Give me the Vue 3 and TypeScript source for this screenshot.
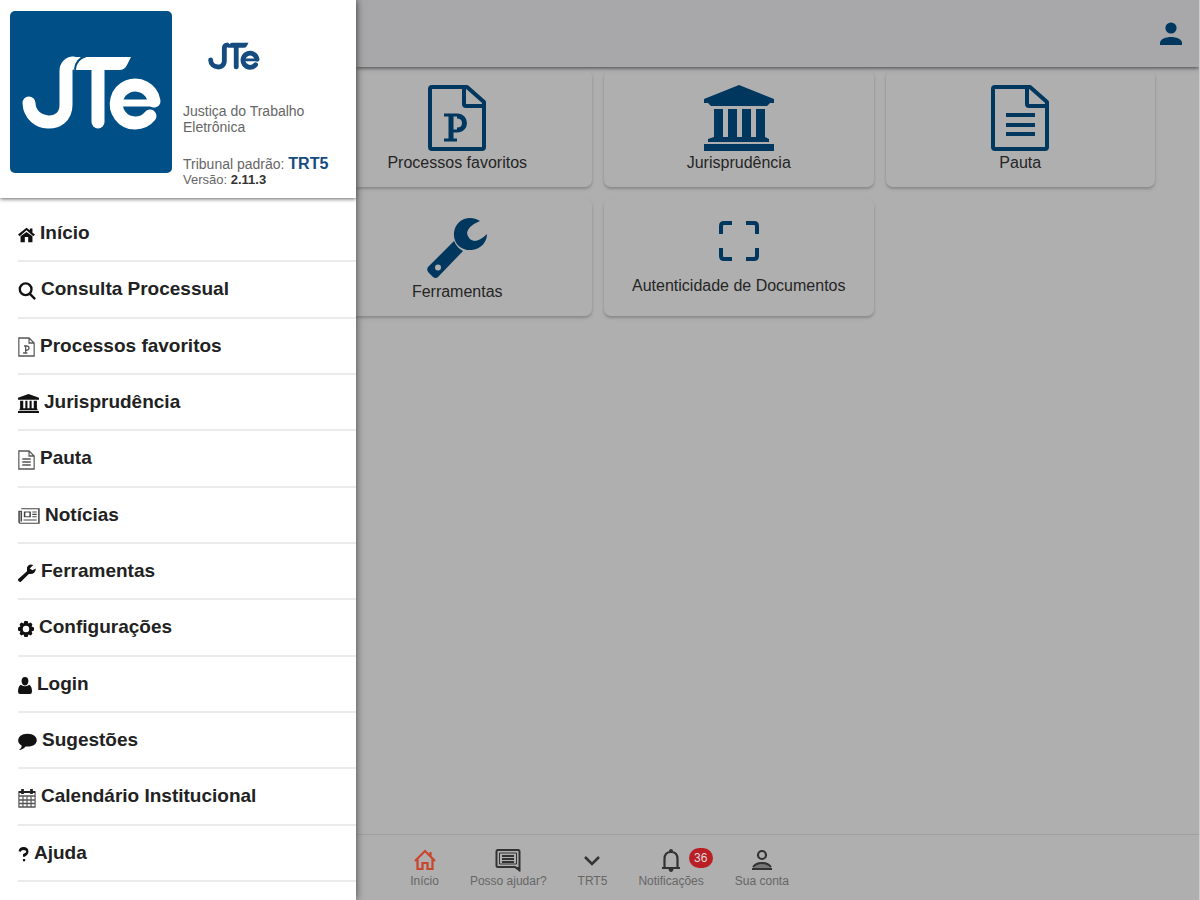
<script setup lang="ts">
interface MenuItem {
  icon: string
  label: string
  width: number
  height: number
}

const menu: MenuItem[] = [
  { icon: 'home', label: 'Início', width: 17, height: 17 },
  { icon: 'search', label: 'Consulta Processual', width: 18, height: 18 },
  { icon: 'file-p', label: 'Processos favoritos', width: 17, height: 20 },
  { icon: 'bank', label: 'Jurisprudência', width: 21, height: 19 },
  { icon: 'file-lines', label: 'Pauta', width: 17, height: 20 },
  { icon: 'news', label: 'Notícias', width: 22, height: 16 },
  { icon: 'wrench', label: 'Ferramentas', width: 18, height: 18 },
  { icon: 'gear', label: 'Configurações', width: 16, height: 16 },
  { icon: 'user', label: 'Login', width: 14, height: 17 },
  { icon: 'chat', label: 'Sugestões', width: 19, height: 17 },
  { icon: 'calendar', label: 'Calendário Institucional', width: 18, height: 20 },
  { icon: 'question', label: 'Ajuda', width: 11, height: 15 },
]

const cards = [
  { icon: 'file-p', label: 'Processos favoritos', start: true },
  { icon: 'bank', label: 'Jurisprudência', start: false },
  { icon: 'file-lines', label: 'Pauta', start: false },
  { icon: 'wrench', label: 'Ferramentas', start: true },
  { icon: 'scan', label: 'Autenticidade de Documentos', start: false },
]

const tabs = [
  { icon: 'home', label: 'Início', badge: '' },
  { icon: 'help', label: 'Posso ajudar?', badge: '' },
  { icon: 'chevron', label: 'TRT5', badge: '' },
  { icon: 'bell', label: 'Notificações', badge: '36' },
  { icon: 'account', label: 'Sua conta', badge: '' },
]
</script>

<template>
  <div class="page">
    <header class="toolbar">
      <button class="profile" aria-label="Sua conta">
        <svg width="24" height="24" viewBox="0 0 24 24"><circle cx="12" cy="6" r="5.6" /><path d="M1 23v-2c0-4 6-6 11-6s11 2 11 6v2z" /></svg>
      </button>
    </header>

    <main class="cards">
      <button v-for="card in cards" :key="card.label" class="card" :class="{ start: card.start, ['card-' + card.icon]: true }">
        <svg v-if="card.icon === 'file-p' || card.icon === 'file-lines'" class="art" width="58" height="66" viewBox="0 0 58 66" fill="none" stroke="currentColor" stroke-width="4">
          <path d="M4 2H39L56 17V62Q56 64 54 64H4Q2 64 2 62V4Q2 2 4 2Z" stroke-linejoin="round" />
          <path d="M36 2V19Q36 21 38 21H56" />
          <template v-if="card.icon === 'file-p'">
            <path d="M16 30H29M24 46H29M16 55H29" stroke-width="3" />
            <path d="M23 30V55M29 31C39 31 39 45 29 45" stroke-width="5" />
          </template>
          <path v-else d="M15 30H44M15 40H44M15 49H44" />
        </svg>
        <svg v-else-if="card.icon === 'bank'" class="art" width="72" height="66" viewBox="0 0 72 66" fill="currentColor">
          <path d="M36 0L71 14V18H67L64 21H8L5 18H1V14ZM11 24H20V52H25V24H34V52H39V24H48V52H53V24H62V52L66 54V57H5V54L11 52ZM1 59H71V66H1Z" />
        </svg>
        <svg v-else-if="card.icon === 'wrench'" class="art" width="62" height="62" viewBox="0 0 62 62" fill="currentColor">
          <path d="M54 4C43-3 29 3 28 16C27 27 36 34 46 33C55 32 61 25 61 17Q55 23 49 24Q42 23 41 16Q42 9 54 4Z" />
          <path fill-rule="evenodd" d="M28 24L2 50Q0 53 3 56L7 60Q10 62 12 60L37 34Q31 31 28 24ZM12 47.500A3 3 0 1 1 12 53.500A3 3 0 1 1 12 47.500Z" />
        </svg>
        <svg v-else class="art" width="40" height="40" viewBox="0 0 40 40" fill="none" stroke="currentColor" stroke-width="4">
          <path d="M2 13V5Q2 2 5 2H13M27 2H35Q38 2 38 5V13M38 27V35Q38 38 35 38H27M13 38H5Q2 38 2 35V27" />
        </svg>
        <span>{{ card.label }}</span>
      </button>
    </main>

    <footer class="tabs">
      <button v-for="tab in tabs" :key="tab.label" class="tab" :class="{ active: tab.icon === 'home' }">
        <svg v-if="tab.icon === 'home'" width="24" height="24" viewBox="0 0 24 24" fill="none" stroke="currentColor" stroke-width="2.200">
          <path d="M2 13L12 3L22 13M17.500 8V4M4.500 11V21H9.500V15H14.500V21H19.500V11" />
        </svg>
        <svg v-else-if="tab.icon === 'help'" width="26" height="24" viewBox="0 0 26 24" fill="none" stroke="currentColor" stroke-width="2">
          <path d="M3 2H23Q24.500 2 24.500 3.500V22L20 19H3Q1.500 19 1.500 17.500V3.500Q1.500 2 3 2Z" /><path d="M4.500 5H21.500V16H4.500Z" stroke-width="1" /><path d="M7 8H19M7 11H19M7 14H19" /><path d="M19 19H25V24Z" fill="currentColor" stroke="none" />
        </svg>
        <svg v-else-if="tab.icon === 'chevron'" width="24" height="24" viewBox="0 0 24 24" fill="none" stroke="currentColor" stroke-width="2.500"><path d="M5 9L12 16L19 9" /></svg>
        <svg v-else-if="tab.icon === 'bell'" width="24" height="24" viewBox="0 0 24 24">
          <path d="M3 20H21M5.500 19V11Q5.500 4 12 4Q18.500 4 18.500 11V19" fill="none" stroke="currentColor" stroke-width="2.200" /><circle cx="12" cy="3" r="2" fill="currentColor" /><path d="M9.500 21H14.500Q14 24 12 24T9.500 21Z" fill="currentColor" />
        </svg>
        <svg v-else width="24" height="24" viewBox="0 0 24 24">
          <circle cx="12" cy="7" r="4" fill="none" stroke="currentColor" stroke-width="2.200" /><path d="M3 21Q3 14 12 14T21 21Z" fill="#777" /><path d="M2 21H22M3 19Q6 15 12 15T21 19" fill="none" stroke="currentColor" stroke-width="2" />
        </svg>
        <span>{{ tab.label }}</span>
        <span v-if="tab.badge" class="badge">{{ tab.badge }}</span>
      </button>
    </footer>

    <aside class="drawer">
      <div class="brand">
        <svg class="logo" width="162" height="162" viewBox="0 0 162 162" role="img" aria-label="JTe">
          <rect width="162" height="162" rx="5" fill="#004f86" />
          <g fill="none" stroke="#fff" stroke-width="13" stroke-linecap="round">
            <path d="M19 92C20 116 56 118 56 94V60Q56 53 63 52" />
            <path d="M88 56V111" />
            <path d="M144 90A19 19 0 1 0 140 105" />
            <path d="M110 92H146" stroke-width="7" />
          </g>
          <path d="M64 46H71L65 54L60 58ZM76 46H121L117 54Q115 59 109 59H66Q66 49 76 46Z" fill="#fff" />
          <path d="M65 58Q66 48 76 45" fill="none" stroke="#004f86" stroke-width="2" />
        </svg>
        <div class="about">
          <svg class="small-logo" width="52" height="28" viewBox="12 44 140 75" aria-hidden="true">
            <g fill="none" stroke="#164b80" stroke-width="13" stroke-linecap="round">
              <path d="M19 92C20 116 56 118 56 94V60Q56 53 63 52" />
              <path d="M88 56V111" />
              <path d="M144 90A19 19 0 1 0 140 105" />
              <path d="M110 92H146" stroke-width="7" />
            </g>
            <path d="M76 46H121L117 54Q115 59 109 59H66Q66 49 76 46Z" fill="#164b80" />
          </svg>
          <p class="tagline">Justiça do Trabalho Eletrônica</p>
          <p class="court">Tribunal padrão: <strong>TRT5</strong></p>
          <p class="version">Versão: <b>2.11.3</b></p>
        </div>
      </div>

      <nav class="menu">
        <a v-for="item in menu" :key="item.label" href="#" class="item">
          <svg :width="item.width" :height="item.height" viewBox="0 0 20 20" preserveAspectRatio="none" fill="currentColor">
            <path v-if="item.icon === 'home'" d="M0 10L10 2L14 5V3H17V8L20 10L18 12L10 5L2 12ZM3 12L10 7L17 12V19H12V13H8V19H3Z" />
            <path v-else-if="item.icon === 'search'" d="M13 13L19 19M15 8A6.500 6.500 0 1 1 2 8A6.500 6.500 0 1 1 15 8Z" fill="none" stroke="currentColor" stroke-width="2.600" />
            <g v-else-if="item.icon === 'file-p'" fill="none" stroke="#555" stroke-width="1.400"><path d="M1 1H13L19 6V19H1ZM13 1V6H19" /><path d="M7 9H10Q13 9 13 11T9 13.500M9 9V16M6 16H11" /></g>
            <path v-else-if="item.icon === 'bank'" d="M10 0L20 4V6H0V4ZM2 7H5V15H7V7H9V15H11V7H13V15H15V7H18V15L19 17H1L2 15ZM0 18H20V20H0Z" />
            <g v-else-if="item.icon === 'file-lines'" fill="none" stroke="#555" stroke-width="1.400"><path d="M1 1H13L19 6V19H1ZM13 1V6H19" /><path d="M5 9H15M5 12H15M5 15H15" /></g>
            <path v-else-if="item.icon === 'news'" d="M3 1H19V19H2Q1 19 1 17V4H3V17M6 5H11V11H6ZM13 5H17M13 8H17M13 11H17M5 15H17" fill="none" stroke="#444" stroke-width="1.400" />
            <path v-else-if="item.icon === 'wrench'" d="M17 1Q12-1 10 4V8L0 17Q0 20 3 20L12 11Q19 12 20 5L16 7L13 5Z" />
            <path v-else-if="item.icon === 'gear'" fill-rule="evenodd" d="M8 0H12L13 3L16 2L18 4L17 7L20 8V12L17 13L18 16L16 18L13 17L12 20H8L7 17L4 18L2 16L3 13L0 12V8L3 7L2 4L4 2L7 3ZM10 6A4 4 0 1 0 10 14A4 4 0 1 0 10 6Z" />
            <path v-else-if="item.icon === 'user'" d="M10 0C17 0 16 10 10 10S3 0 10 0ZM4 9Q10 13 16 9Q20 11 20 17Q20 20 17 20H3Q0 20 0 17Q0 11 4 9Z" />
            <path v-else-if="item.icon === 'chat'" d="M10 1C23 1 23 16 10 16L8 16Q5 20 1 20Q4 18 4 15C-3 11 0 1 10 1Z" />
            <g v-else-if="item.icon === 'calendar'" fill="none" stroke="#555" stroke-width="1.300"><path d="M1 4H19V19H1ZM1 8H19M1 12H19M1 15.500H19M5.500 8V19M10 8V19M14.500 8V19" /><path d="M5 1V6M15 1V6" stroke="#222" stroke-width="3" /><path d="M1 4H19" stroke="#222" stroke-width="2" /></g>
            <path v-else d="M3 6Q4 2 10 2Q17 2 17 6Q17 9 11 11V13M11 16V19" fill="none" stroke="currentColor" stroke-width="4" />
          </svg>
          <span>{{ item.label }}</span>
        </a>
      </nav>
    </aside>
  </div>
</template>

<style>
body {
  margin: 0;
}
</style>

<style scoped>
.page {
  position: relative;
  display: flex;
  flex-direction: column;
  min-height: 100vh;
  overflow: hidden;
  border-right: 1px solid #ccc;
  background: #afafaf;
  color: #252525;
  font-family: "Liberation Sans", Arial, sans-serif;
}

button {
  padding: 0;
  border: 0;
  background: none;
  color: inherit;
  font: inherit;
}

svg {
  flex: none;
}

.toolbar {
  display: flex;
  align-items: center;
  justify-content: flex-end;
  height: 67px;
  padding-right: 16px;
  background: #a8a8aa;
  box-shadow: 0 1px 4px #444;
  z-index: 1;
}

.profile {
  display: flex;
  color: #00375f;
}

.profile svg {
  fill: currentColor;
}

.cards {
  flex: 1;
  display: grid;
  grid-template-columns: repeat(4, 1fr);
  grid-auto-rows: 117px;
  align-content: start;
  gap: 12px;
  padding: 3px 44px 0 41px;
}

.card {
  display: flex;
  flex-direction: column;
  align-items: center;
  justify-content: center;
  gap: 3px;
  border-radius: 7px;
  box-shadow: 0 2px 3px #888;
  font-size: 16px;
  line-height: 18px;
}

.card.start {
  grid-column-start: 2;
}

.card-wrench {
  gap: 4px;
  padding-top: 3px;
}

.card-scan {
  gap: 16px;
}

.art {
  color: #00375f;
}

.tabs {
  display: flex;
  justify-content: center;
  gap: 31px;
  height: 65px;
  border-top: 1px solid #a0a0a0;
}

.tab {
  position: relative;
  display: flex;
  flex-direction: column;
  align-items: center;
  justify-content: center;
  gap: 2px;
  color: #333;
  font-size: 12px;
  line-height: 14px;
}

.tab span {
  color: #666;
}

.tab.active svg {
  color: #c9452c;
}

.tab .badge {
  position: absolute;
  top: 13px;
  right: -9px;
  width: 24px;
  border-radius: 10px;
  background: #b91f25;
  color: #ddd;
  line-height: 20px;
  text-align: center;
}

.drawer {
  position: absolute;
  top: 0;
  bottom: 0;
  left: 0;
  z-index: 2;
  display: flex;
  flex-direction: column;
  width: 356px;
  background: #fff;
  box-shadow: 0 0 8px #444;
}

.brand {
  display: flex;
  gap: 11px;
  height: 187px;
  padding: 11px 10px 0;
  box-shadow: 0 1px 4px #666;
}

.about {
  flex: 1;
  color: #666;
}

.small-logo {
  display: block;
  margin: 31px 0 33px 25px;
}

.about p {
  margin: 0;
  font-size: 14px;
  line-height: 16px;
}

.about .tagline {
  max-width: 140px;
  margin-bottom: 21px;
}

.about strong {
  color: #164b80;
  font-size: 16px;
}

.about .version {
  font-size: 13px;
}

.about b {
  color: #333;
}

.menu {
  flex: 1;
  display: grid;
  grid-auto-rows: 1fr;
  padding: 8px 0 18px 18px;
}

.item {
  display: flex;
  align-items: center;
  gap: 5px;
  border-bottom: 2px solid #ebebeb;
  color: #222;
  font-size: 19px;
  font-weight: bold;
  text-decoration: none;
}

.item svg {
  margin-top: 3px;
  color: #111;
}
</style>
